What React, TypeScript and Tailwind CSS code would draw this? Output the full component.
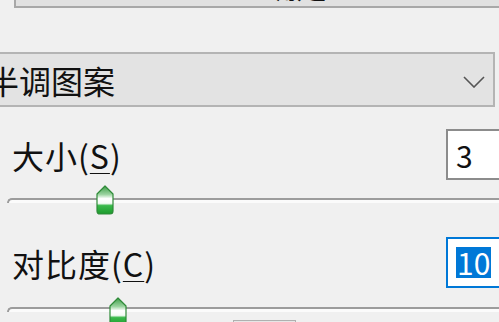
const FONT = { fontFamily: '"Noto Sans CJK SC", "Noto Sans", sans-serif' };

function Thumb() {
  return (
    <svg width="18" height="30" viewBox="0 0 18 30" aria-hidden="true">
      <defs>
        <linearGradient id="thumbFill" x1="0" y1="0" x2="0" y2="1">
          <stop offset="0%" stopColor="#3f9e4a" />
          <stop offset="30%" stopColor="#9ad39f" />
          <stop offset="45%" stopColor="#ffffff" />
          <stop offset="62%" stopColor="#f4fbf4" />
          <stop offset="70%" stopColor="#39b94a" />
          <stop offset="100%" stopColor="#1c9a2c" />
        </linearGradient>
      </defs>
      <path
        d="M9 1 L17 9 V26 Q17 29 14 29 H4 Q1 29 1 26 V9 Z"
        fill="url(#thumbFill)"
        stroke="#2e8a38"
        strokeWidth="1.2"
        strokeLinejoin="round"
      />
    </svg>
  );
}

function Slider({ thumbX, trackTop, thumbTop }: { thumbX: number; trackTop: string; thumbTop: string }) {
  return (
    <div className="relative h-[30px]">
      <div className={`absolute left-[7px] right-0 h-[5px] border-t-2 border-l-2 border-[#9c9c9c] bg-[#fbfbfb] rounded-tl-[6px] ${trackTop}`} />
      <div className={`absolute ${thumbTop}`} style={{ left: thumbX }}>
        <Thumb />
      </div>
    </div>
  );
}

export default function App() {
  return (
    <div className="w-[499px] h-[322px] overflow-hidden bg-[#f0f0f0] text-[#111]" style={FONT}>
      {/* top button, mostly scrolled off */}
      <div className="ml-[14px] -mr-[40px] h-[60px] -mt-[52px] flex items-end justify-center pl-[40px] pb-[4px] border-2 border-[#a8a8a8] bg-[#e1e1e1] text-[30px] leading-none">
        <span className="translate-y-[-2px]">确定</span>
      </div>

      {/* pattern type select */}
      <div className="mt-[44px] -ml-[20px] mr-[4px] h-[55px] flex items-center border-2 border-[#b4b4b4] bg-[#e3e3e3] pl-[5px] pr-[8px]">
        <span className="text-[32px] leading-none">半调图案</span>
        <svg className="ml-auto mt-[4px]" width="22" height="12" viewBox="0 0 22 12" fill="none" aria-hidden="true">
          <path d="M1 1 L11 11 L21 1" stroke="#555" strokeWidth="1.6" />
        </svg>
      </div>

      {/* size */}
      <div className="mt-[22px] h-[51px] flex items-center">
        <span className="pl-[12px] text-[32px] leading-none tracking-[1px]">
          大小(<span className="underline underline-offset-4 decoration-1">S</span>)
        </span>
        <div className="ml-auto -mr-[20px] w-[73px] h-[51px] border-2 border-[#8c8c8c] bg-white flex items-center pl-[8px] text-[30px] leading-none">
          3
        </div>
      </div>
      <div className="mt-[5px]">
        <Slider thumbX={96} trackTop="top-[13px]" thumbTop="top-0" />
      </div>

      {/* contrast */}
      <div className="mt-[22px] h-[51px] flex items-center">
        <span className="pl-[12px] text-[32px] leading-none tracking-[1px]">
          对比度(<span className="underline underline-offset-4 decoration-1">C</span>)
        </span>
        <div className="ml-auto -mr-[20px] w-[73px] h-[51px] border-2 border-[#0078d7] bg-white flex items-center pl-[8px]">
          <span className="bg-[#0078d7] text-white text-[30px] leading-[31px] px-[1px]">10</span>
        </div>
      </div>
      <div className="mt-[7px]">
        <Slider thumbX={109} trackTop="top-[12px]" thumbTop="top-[2px]" />
      </div>

      <div className="-mt-[5px] ml-[233px] w-[63px] h-[20px] border border-[#b0b0b0] bg-[#e6e6e6]" />
    </div>
  );
}
